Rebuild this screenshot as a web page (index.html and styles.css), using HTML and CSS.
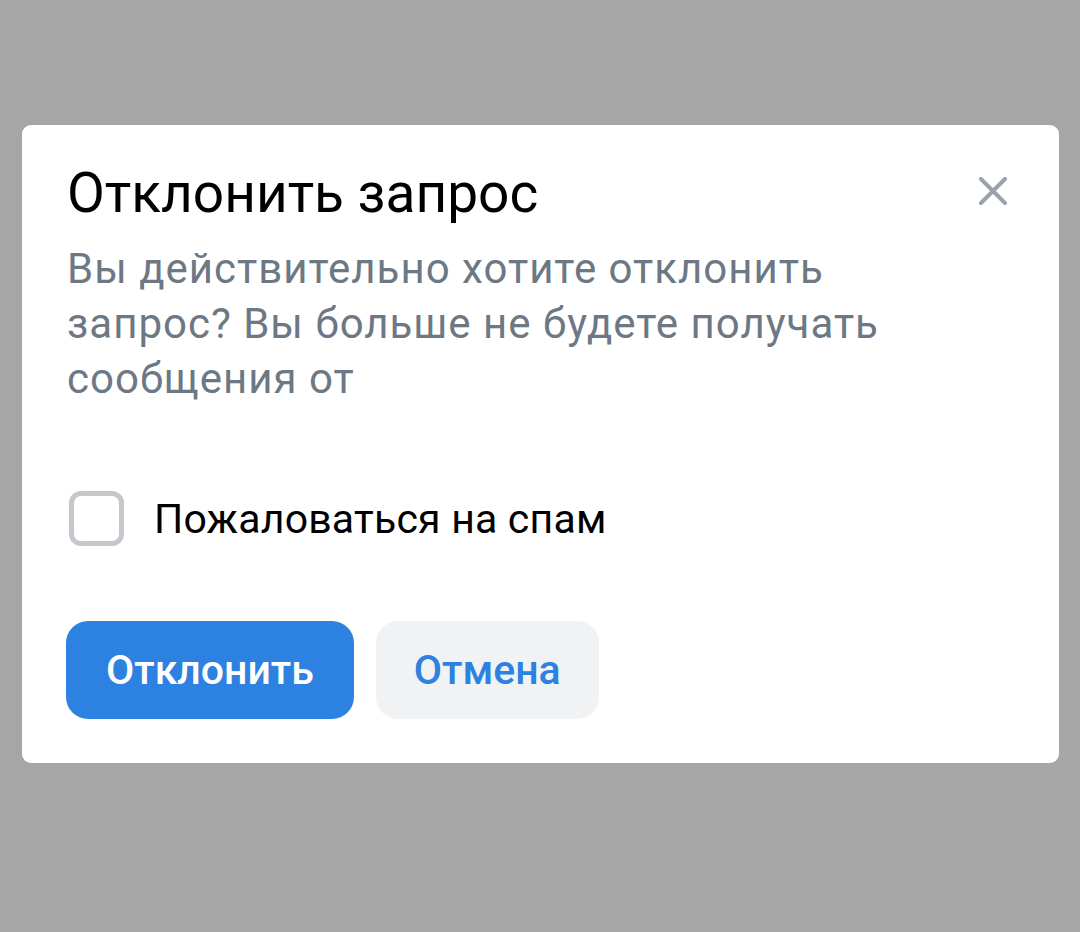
FILE: index.html
```html
<!DOCTYPE html>
<html lang="ru">
<head>
  <meta charset="UTF-8">
  <title>Отклонить запрос</title>
  <link rel="stylesheet" href="styles.css">
</head>
<body>
  <div class="dialog">
    <div class="dialog-head">
      <h2 class="dialog-title">Отклонить запрос</h2>
      <button class="close" type="button" aria-label="Закрыть">
        <svg width="28" height="28" viewBox="0 0 28 28"><path d="M2 2L26 26M26 2L2 26" stroke="#99a2ad" stroke-width="4" stroke-linecap="round"/></svg>
      </button>
    </div>
    <p class="dialog-text">Вы действительно хотите отклонить запрос? Вы больше не будете получать сообщения от</p>

    <label class="check">
      <span class="box"></span>
      <span>Пожаловаться на спам</span>
    </label>

    <div class="actions">
      <button class="btn primary" type="button">Отклонить</button>
      <button class="btn secondary" type="button">Отмена</button>
    </div>
  </div>
</body>
</html>
```

FILE: styles.css
```css
body { margin: 0; padding: 125px 21px 0 22px; background: #a6a6a6; font-family: Roboto, "Noto Sans", sans-serif; }
.dialog { background: #fff; border-radius: 9px; height: 638px; box-sizing: border-box; padding: 36px 44px 0 44px; }
.dialog-head { display: flex; justify-content: space-between; align-items: flex-start; }
.dialog-title { margin: 0 0 0 1px; font-size: 55px; line-height: 64px; font-weight: 400; color: #000; }
.close { border: none; background: none; padding: 0; margin: 16px 8px 0 0; cursor: pointer; display: flex; }
.dialog-text { margin: 16px 0 0 1px; font-size: 42px; line-height: 55px; letter-spacing: 1px; color: #6d7885; max-width: 880px; }
.check { display: flex; align-items: center; gap: 30px; margin-top: 85px; font-size: 41px; letter-spacing: 0.2px; color: #000; }
.box { width: 45px; height: 45px; border: 5px solid #c4c8cc; border-radius: 12px; flex: none; margin-left: 3px; }
.actions { display: flex; gap: 22px; margin-top: 75px; }
.btn { border: none; border-radius: 22px; height: 98px; padding: 0 40px; font-family: inherit; font-size: 41px; font-weight: 500; cursor: pointer; }
.primary { background: #2d81e0; color: #fff; }
.secondary { background: #f0f2f4; color: #2d81e0; padding: 0 38px; }
```
